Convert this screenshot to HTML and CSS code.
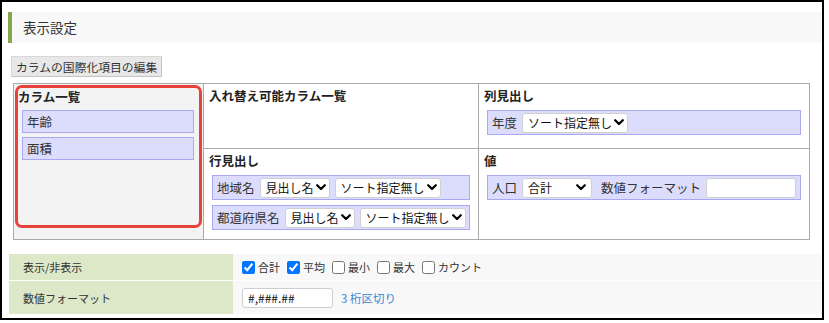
FILE: index.html
```html
<!DOCTYPE html>
<html lang="ja">
<head>
<meta charset="utf-8">
<title>表示設定</title>
<link rel="stylesheet" href="styles.css">
</head>
<body>
<div class="frame">
  <div class="page-title">表示設定</div>
  <div class="toolbar"><button class="btn" type="button">カラムの国際化項目の編集</button></div>

  <div class="pivot">
    <div class="cell cell-columns">
      <div class="column-list">
        <div class="heading">カラム一覧</div>
        <div class="chip">年齢</div>
        <div class="chip">面積</div>
      </div>
    </div>

    <div class="cell">
      <div class="heading">入れ替え可能カラム一覧</div>
    </div>

    <div class="cell">
      <div class="heading">列見出し</div>
      <div class="field">
        <span class="field-label">年度</span>
        <span class="select">ソート指定無し<svg class="chev" viewBox="0 0 10 7" width="10" height="7"><path d="M1.2 1.2 L5 5 L8.8 1.2" fill="none" stroke="#000" stroke-width="2.2" stroke-linecap="round" stroke-linejoin="round"/></svg></span>
      </div>
    </div>

    <div class="cell">
      <div class="heading">行見出し</div>
      <div class="field">
        <span class="field-label">地域名</span>
        <span class="select">見出し名<svg class="chev" viewBox="0 0 10 7" width="10" height="7"><path d="M1.2 1.2 L5 5 L8.8 1.2" fill="none" stroke="#000" stroke-width="2.2" stroke-linecap="round" stroke-linejoin="round"/></svg></span>
        <span class="select">ソート指定無し<svg class="chev" viewBox="0 0 10 7" width="10" height="7"><path d="M1.2 1.2 L5 5 L8.8 1.2" fill="none" stroke="#000" stroke-width="2.2" stroke-linecap="round" stroke-linejoin="round"/></svg></span>
      </div>
      <div class="field field-next">
        <span class="field-label">都道府県名</span>
        <span class="select">見出し名<svg class="chev" viewBox="0 0 10 7" width="10" height="7"><path d="M1.2 1.2 L5 5 L8.8 1.2" fill="none" stroke="#000" stroke-width="2.2" stroke-linecap="round" stroke-linejoin="round"/></svg></span>
        <span class="select">ソート指定無し<svg class="chev" viewBox="0 0 10 7" width="10" height="7"><path d="M1.2 1.2 L5 5 L8.8 1.2" fill="none" stroke="#000" stroke-width="2.2" stroke-linecap="round" stroke-linejoin="round"/></svg></span>
      </div>
    </div>

    <div class="cell">
      <div class="heading">値</div>
      <div class="field">
        <span class="field-label">人口</span>
        <span class="select select-fixed">合計<svg class="chev" viewBox="0 0 10 7" width="10" height="7"><path d="M1.2 1.2 L5 5 L8.8 1.2" fill="none" stroke="#000" stroke-width="2.2" stroke-linecap="round" stroke-linejoin="round"/></svg></span>
        <span class="field-label field-label-gap">数値フォーマット</span>
        <input class="text-input text-input-value" type="text" value="">
      </div>
    </div>
  </div>

  <div class="settings">
    <div class="set-label">表示/非表示</div>
    <div class="set-value">
      <label class="check"><input type="checkbox" checked>合計</label>
      <label class="check"><input type="checkbox" checked>平均</label>
      <label class="check"><input type="checkbox">最小</label>
      <label class="check"><input type="checkbox">最大</label>
      <label class="check"><input type="checkbox">カウント</label>
    </div>
    <div class="set-label">数値フォーマット</div>
    <div class="set-value">
      <input class="text-input text-input-format" type="text" value="#,###.##">
      <a class="link" href="#">3 桁区切り</a>
    </div>
  </div>
</div>
</body>
</html>
```

FILE: styles.css
```css
* {
  box-sizing: border-box;
}

html, body {
  margin: 0;
  padding: 0;
  background: #fff;
}

body {
  font-family: "Noto Sans CJK JP", "Noto Sans", sans-serif;
  color: #333;
  font-size: 12px;
}

.frame {
  width: 824px;
  height: 320px;
  border: 2px solid #000;
  padding: 10px 0 4px 6px;
}

.page-title {
  height: 31px;
  line-height: 31px;
  background: #f8f8f8;
  border-left: 4px solid #86a84a;
  padding-left: 11px;
  font-size: 13.5px;
  color: #333;
}

.toolbar {
  margin-top: 13px;
  margin-left: 3px;
  display: flex;
}

.btn {
  height: 21px;
  padding: 0 4px;
  margin: 0;
  font-family: inherit;
  font-size: 11.8px;
  line-height: 19px;
  color: #333;
  background: #e8e8e8;
  border: 1px solid #d8d8d8;
  border-right-color: #c4c4c4;
  border-bottom-color: #c4c4c4;
  border-radius: 0;
}

.pivot {
  margin-top: 6px;
  margin-left: 5px;
  width: 797px;
  height: 157px;
  display: grid;
  grid-template-columns: 189px 274px 330px;
  grid-template-rows: 64px 90px;
  gap: 1px;
  padding: 1px;
  background: #aaa;
}

.cell {
  background: #fff;
  padding: 3px 4px 0 4px;
}

.cell-columns {
  grid-row: 1 / 3;
  background: #f3f3f3;
  padding: 1px;
}

.column-list {
  height: 143px;
  border: 3px solid #e8433a;
  border-radius: 7px;
}

.heading {
  font-weight: bold;
  font-size: 12.5px;
  line-height: 18px;
  color: #222;
  padding-left: 1px;
}

.column-list .heading {
  padding-left: 0;
}

.chip {
  margin: 4px 5px 0 4px;
  height: 23px;
  line-height: 21px;
  padding-left: 4px;
  background: #dcdcfc;
  border: 1px solid #a9a9f3;
  font-size: 12.5px;
  color: #333;
}

.field {
  margin: 5px 4px 0 4px;
  height: 25px;
  display: flex;
  align-items: center;
  gap: 5px;
  padding: 0 4px;
  background: #dcdcfc;
  border: 1px solid #a9a9f3;
}

.field-next {
  margin-top: 5px;
}

.field-label {
  font-size: 12.5px;
  color: #333;
  white-space: nowrap;
}

.field-label-gap {
  margin-left: 4px;
}

.select {
  display: inline-flex;
  align-items: center;
  gap: 2px;
  height: 20px;
  padding: 0 3px 0 5px;
  background: #fff;
  border: 1px solid #d0d0d0;
  border-radius: 3px;
  font-size: 12px;
  color: #111;
  white-space: nowrap;
}

.select-fixed {
  width: 70px;
  justify-content: space-between;
  padding-right: 5px;
}

.chev {
  display: block;
  flex: none;
}

.text-input {
  height: 20px;
  margin: 0;
  padding: 0 5px;
  border: 1px solid #cfcfcf;
  border-radius: 3px;
  background: #fff;
  font-family: inherit;
  font-size: 12px;
  color: #111;
  outline: none;
}

.text-input-value {
  width: 90px;
}

.text-input-format {
  width: 91px;
}

.settings {
  margin-top: 14px;
  margin-left: 1px;
  display: grid;
  grid-template-columns: 224px 1fr;
  grid-template-rows: 26px 33px;
  row-gap: 1px;
  background: #fff;
}

.set-label {
  background: #dce8c8;
  padding-left: 14px;
  display: flex;
  align-items: center;
  font-size: 11px;
  color: #333;
}

.set-value {
  background: #f8f8f8;
  padding-left: 9px;
  display: flex;
  align-items: center;
  font-size: 11px;
  color: #333;
}

.check {
  display: inline-flex;
  align-items: center;
  margin-right: 7px;
  white-space: nowrap;
}

.check input {
  width: 13px;
  height: 13px;
  margin: 0 3px 0 0;
}

.link {
  margin-left: 8px;
  color: #3a86d6;
  text-decoration: none;
  font-size: 11.5px;
}
```
